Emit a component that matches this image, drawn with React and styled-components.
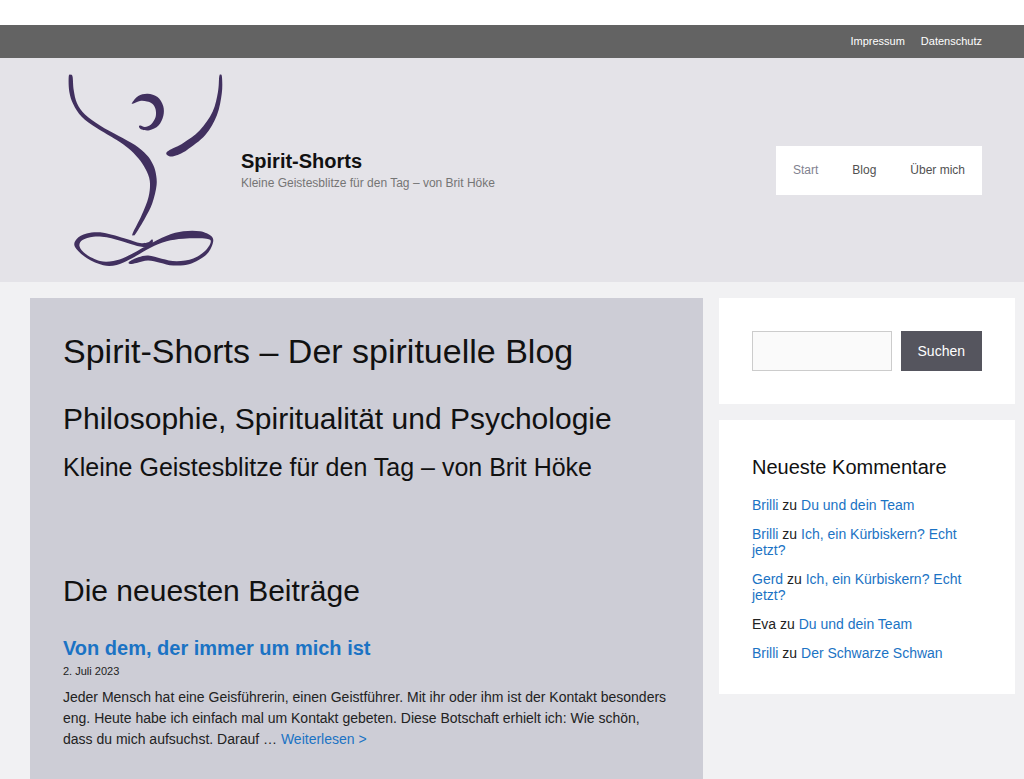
import React, { useState } from 'react';
import styled, { createGlobalStyle } from 'styled-components';

const GlobalStyle = createGlobalStyle`
  *, *::before, *::after {
    box-sizing: border-box;
  }
  body {
    margin: 0;
    background-color: #f1f1f3;
    color: #222222;
    font-family: "Liberation Sans", Arial, Helvetica, sans-serif;
    font-size: 14px;
    line-height: 21px;
  }
  a {
    color: #1b73c4;
    text-decoration: none;
  }
  h1, h2, h3, h4, p, ul {
    margin: 0;
    padding: 0;
    font-weight: 400;
  }
  ul {
    list-style: none;
  }
`;

const TopBar = styled.nav`
  display: flex;
  justify-content: flex-end;
  gap: 16px;
  padding: 6px 42px;
  border-top: 25px solid white;
  background-color: #636363;
`;

const TopLink = styled.a`
  color: white;
  font-size: 11px;
`;

const Header = styled.header`
  display: flex;
  align-items: center;
  justify-content: space-between;
  padding: 16px 42px 16px 63px;
  background-color: #e4e3e8;
`;

const Branding = styled.div`
  display: flex;
  align-items: center;
  gap: 16px;
`;

const Logo = styled.svg`
  display: block;
  width: 162px;
  height: 192px;
  fill: #41305f;
`;

const SiteTitle = styled.p`
  font-size: 20px;
  line-height: 25px;
  font-weight: bold;

  a {
    color: #111111;
  }
`;

const Tagline = styled.p`
  color: #757575;
  font-size: 12px;
  line-height: 18px;
`;

const MainNav = styled.nav`
  display: flex;
  background-color: white;
`;

const NavLink = styled.a`
  padding: 0 17px;
  color: ${(props) => (props.$current ? '#81828f' : '#515151')};
  font-size: 12px;
  line-height: 49px;
`;

const Page = styled.div`
  display: grid;
  grid-template-columns: minmax(0, 1fr) 296px;
  gap: 16px;
  padding: 16px 9px 0 30px;
`;

const Content = styled.main`
  padding: 33px;
  background-color: #cdcdd6;
  color: #111111;
`;

const PageTitle = styled.h1`
  margin-bottom: 29px;
  font-size: 34px;
  line-height: 41px;
`;

const SectionTitle = styled.h2`
  margin-bottom: 17px;
  font-size: 30px;
  line-height: 35px;
`;

const SubTitle = styled.h3`
  margin-bottom: 91px;
  font-size: 25px;
  line-height: 29px;
`;

const Post = styled.article`
  margin-top: 28px;
  color: #222222;
`;

const PostTitle = styled.h4`
  font-size: 20px;
  line-height: 25px;
  font-weight: bold;
`;

const PostDate = styled.time`
  display: block;
  margin-bottom: 5px;
  font-size: 11px;
`;

const Sidebar = styled.aside`
  display: flex;
  flex-direction: column;
  gap: 16px;
`;

const Widget = styled.section`
  padding: 33px;
  background-color: white;
`;

const SearchForm = styled.form`
  display: flex;
  gap: 9px;
`;

const SearchInput = styled.input`
  flex: 1;
  min-width: 0;
  height: 40px;
  padding: 8px 12px;
  border: 1px solid #cccccc;
  border-radius: 0;
  background-color: #fafafa;
  font: inherit;
`;

const SearchButton = styled.button`
  height: 40px;
  padding: 0 17px;
  border: none;
  background-color: #55555e;
  color: white;
  font: inherit;
  cursor: pointer;
`;

const WidgetTitle = styled.h2`
  margin-bottom: 16px;
  color: #111111;
  font-size: 20px;
  line-height: 28px;
`;

const Comment = styled.li`
  margin-bottom: 13px;
  line-height: 16px;

  &:last-child {
    margin-bottom: 0;
  }
`;

// Closed curve running through every point of a brush stroke's outline
const strokeOutline = (points) => {
  const n = points.length;
  const at = (i) => points[(i + n) % n];
  const curves = points.map(([x, y], i) => {
    const [px, py] = at(i - 1);
    const [nx, ny] = at(i + 1);
    const [ax, ay] = at(i + 2);
    return `C${x + (nx - px) / 6} ${y + (ny - py) / 6} ${nx - (ax - x) / 6} ${ny - (ay - y) / 6} ${nx} ${ny}`;
  });
  return `M${points[0].join(' ')}${curves.join('')}Z`;
};

const logoStrokes = [
  // left arm and body
  [
    [70.7, 74.7], [68.7, 76.7], [69.3, 91.7], [73.3, 104.3], [81.7, 116.7], [96.7, 128],
    [116.7, 140], [128.3, 148.3], [138.3, 158.3], [145.5, 169], [149.8, 181], [148.6, 196.7],
    [141.7, 215], [132.7, 233.3], [133.7, 235.3], [136, 233.3], [145, 218.3], [152.3, 203.3],
    [156.6, 185], [155.5, 171.7], [152.2, 163], [146.7, 155], [135, 145], [118.3, 135.7],
    [100, 125.5], [85, 114.5], [77, 103.3], [73.7, 90], [72.6, 76.7],
  ],
  // right arm
  [
    [220.5, 74.5], [222, 77.3], [221.8, 93.3], [217, 115], [205.3, 135], [187, 149.9],
    [176.7, 155.2], [170, 156.5], [166.2, 153.5], [170, 149.8], [183.3, 142.9], [199.6, 130.5],
    [212.6, 111.7], [218, 91.7], [219.2, 76.7],
  ],
  // head
  [
    [132, 103], [138.3, 96], [147.7, 93.7], [157.5, 97], [163.2, 106], [163.3, 116],
    [158.5, 125.5], [149.5, 130.2], [141.7, 129.5], [139, 126.7], [140.5, 125.6], [145, 127.1],
    [151, 124.5], [155.6, 117], [155.5, 109], [152.3, 103.7], [147, 101.4], [140, 101],
    [133.5, 103.4],
  ],
  // crossed legs
  [
    [152, 239.3], [152.7, 242.3], [148.3, 246.8], [140, 246.5], [126.7, 242.7], [106.7, 237.3],
    [93.3, 236.7], [82.5, 240], [79.5, 246.3], [86, 254.3], [100, 261], [113.3, 261],
    [126.7, 256.5], [146.7, 245.7], [166.7, 235.7], [183.3, 231.3], [200, 231.3], [211.5, 236.3],
    [212.7, 243.8], [206, 255], [190, 264], [173.3, 265.5], [160, 262.7], [148, 260.5],
    [136.7, 263], [130, 264], [129.2, 261.7], [138.3, 257.3], [148.3, 255.5], [161.7, 258.7],
    [176.7, 261.3], [193.3, 258.5], [205, 251], [210.7, 242.3], [206.5, 238.7], [183.3, 238.7],
    [166.7, 241.3], [150, 248], [130, 259.3], [116.7, 265], [103.3, 265.3], [87, 258.3],
    [75, 247], [76.7, 239], [86.7, 233.5], [103.3, 232.7], [126.7, 239], [140, 243],
    [148.3, 242.3],
  ],
];

const comments = [
  { id: 1, author: 'Brilli', linked: true, post: 'Du und dein Team' },
  { id: 2, author: 'Brilli', linked: true, post: 'Ich, ein Kürbiskern? Echt jetzt?' },
  { id: 3, author: 'Gerd', linked: true, post: 'Ich, ein Kürbiskern? Echt jetzt?' },
  { id: 4, author: 'Eva', linked: false, post: 'Du und dein Team' },
  { id: 5, author: 'Brilli', linked: true, post: 'Der Schwarze Schwan' },
];

const App = () => {
  const [query, setQuery] = useState('');

  return (
    <>
      <GlobalStyle />
      <TopBar aria-label="Rechtliches">
        <TopLink href="#impressum">Impressum</TopLink>
        <TopLink href="#datenschutz">Datenschutz</TopLink>
      </TopBar>
      <Header>
        <Branding>
          <Logo viewBox="63 74 162 192" aria-hidden="true">
            {logoStrokes.map((points) => (
              <path key={points[0].join()} d={strokeOutline(points)} />
            ))}
          </Logo>
          <div>
            <SiteTitle><a href="#start">Spirit-Shorts</a></SiteTitle>
            <Tagline>Kleine Geistesblitze für den Tag – von Brit Höke</Tagline>
          </div>
        </Branding>
        <MainNav aria-label="Hauptmenü">
          <NavLink href="#start" $current>Start</NavLink>
          <NavLink href="#blog">Blog</NavLink>
          <NavLink href="#ueber-mich">Über mich</NavLink>
        </MainNav>
      </Header>
      <Page>
        <Content>
          <PageTitle>Spirit-Shorts – Der spirituelle Blog</PageTitle>
          <SectionTitle>Philosophie, Spiritualität und Psychologie</SectionTitle>
          <SubTitle>Kleine Geistesblitze für den Tag – von Brit Höke</SubTitle>
          <SectionTitle>Die neuesten Beiträge</SectionTitle>
          <Post>
            <PostTitle><a href="#beitrag">Von dem, der immer um mich ist</a></PostTitle>
            <PostDate dateTime="2023-07-02">2. Juli 2023</PostDate>
            <p>
              Jeder Mensch hat eine Geisführerin, einen Geistführer. Mit ihr oder ihm ist der
              Kontakt besonders eng. Heute habe ich einfach mal um Kontakt gebeten. Diese
              Botschaft erhielt ich: Wie schön, dass du mich aufsuchst. Darauf …
              {' '}
              <a href="#beitrag">Weiterlesen &gt;</a>
            </p>
          </Post>
        </Content>
        <Sidebar>
          <Widget>
            <SearchForm role="search" onSubmit={(event) => event.preventDefault()}>
              <SearchInput
                type="search"
                aria-label="Suchen"
                value={query}
                onChange={(event) => setQuery(event.target.value)}
              />
              <SearchButton type="submit">Suchen</SearchButton>
            </SearchForm>
          </Widget>
          <Widget>
            <WidgetTitle>Neueste Kommentare</WidgetTitle>
            <ul>
              {comments.map((comment) => (
                <Comment key={comment.id}>
                  {comment.linked ? <a href="#autor">{comment.author}</a> : comment.author}
                  {' zu '}
                  <a href="#kommentar">{comment.post}</a>
                </Comment>
              ))}
            </ul>
          </Widget>
        </Sidebar>
      </Page>
    </>
  );
};

export default App;
